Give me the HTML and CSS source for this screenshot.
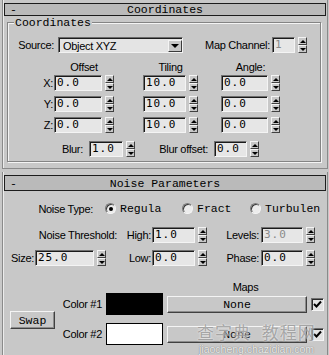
FILE: index.html
```html
<!DOCTYPE html>
<html lang="en">
<head>
<meta charset="UTF-8">
<meta name="viewport" content="width=device-width, initial-scale=1.0">
<title>Noise Map Parameters</title>
<link rel="stylesheet" href="styles.css">
</head>
<body>
<div class="rollout r1">
  <div class="head"><span class="minus">-</span><span class="title">Coordinates</span></div>
  <fieldset class="group">
    <legend>Coordinates</legend>
    <div class="row src-row">
      <span class="lbl w46">Source:</span>
      <div class="combo"><span class="combo-text">Object XYZ</span><span class="combo-btn"></span></div>
      <span class="lbl w86">Map Channel:</span>
      <div class="spin ml2"><span class="field f23 dim">1</span><span class="arrows"><i class="up"></i><i class="dn"></i></span></div>
    </div>
    <div class="row cap-row">
      <span class="w46"></span>
      <span class="cap c-off">Offset</span>
      <span class="cap c-til">Tiling</span>
      <span class="cap c-ang">Angle:</span>
    </div>
    <div class="row xyz x-row">
      <span class="lbl w46 pr1">X:</span>
      <div class="spin"><span class="field f48">0.0</span><span class="arrows"><i class="up"></i><i class="dn"></i></span></div>
      <div class="spin c-til"><span class="field f43">10.0</span><span class="arrows"><i class="up"></i><i class="dn"></i></span></div>
      <div class="spin c-ang"><span class="field f47">0.0</span><span class="arrows"><i class="up"></i><i class="dn"></i></span></div>
    </div>
    <div class="row xyz">
      <span class="lbl w46 pr1">Y:</span>
      <div class="spin"><span class="field f48">0.0</span><span class="arrows"><i class="up"></i><i class="dn"></i></span></div>
      <div class="spin c-til"><span class="field f43">10.0</span><span class="arrows"><i class="up"></i><i class="dn"></i></span></div>
      <div class="spin c-ang"><span class="field f47">0.0</span><span class="arrows"><i class="up"></i><i class="dn"></i></span></div>
    </div>
    <div class="row xyz">
      <span class="lbl w46 pr1">Z:</span>
      <div class="spin"><span class="field f48">0.0</span><span class="arrows"><i class="up"></i><i class="dn"></i></span></div>
      <div class="spin c-til"><span class="field f43">10.0</span><span class="arrows"><i class="up"></i><i class="dn"></i></span></div>
      <div class="spin c-ang"><span class="field f47">0.0</span><span class="arrows"><i class="up"></i><i class="dn"></i></span></div>
    </div>
    <div class="row blur-row">
      <span class="lbl w75">Blur:</span>
      <div class="spin ml6"><span class="field f34">1.0</span><span class="arrows"><i class="up"></i><i class="dn"></i></span></div>
      <span class="lbl w73">Blur offset:</span>
      <div class="spin ml6"><span class="field f33">0.0</span><span class="arrows"><i class="up"></i><i class="dn"></i></span></div>
    </div>
  </fieldset>
</div>

<div class="rollout r2">
  <div class="head"><span class="minus">-</span><span class="title">Noise Parameters</span></div>

  <div class="row type-row">
    <span class="lbl w89">Noise Type:</span>
    <label class="opt o1"><span class="radio on"></span><span class="opt-text">Regula</span></label>
    <label class="opt o2"><span class="radio"></span><span class="opt-text">Fract</span></label>
    <label class="opt o3"><span class="radio"></span><span class="opt-text">Turbulen</span></label>
  </div>

  <div class="row par-row thr-row">
    <span class="lbl w113">Noise Threshold:</span>
    <span class="lbl w34">High:</span>
    <div class="spin ml1"><span class="field f43">1.0</span><span class="arrows"><i class="up"></i><i class="dn"></i></span></div>
    <span class="lbl w52">Levels:</span>
    <div class="spin ml2"><span class="field f42 dim">3.0</span><span class="arrows"><i class="up"></i><i class="dn"></i></span></div>
  </div>

  <div class="row par-row size-row">
    <span class="lbl w30">Size:</span>
    <div class="spin ml1"><span class="field f59">25.0</span><span class="arrows"><i class="up"></i><i class="dn"></i></span></div>
    <span class="lbl w45">Low:</span>
    <div class="spin ml1"><span class="field f43">0.0</span><span class="arrows"><i class="up"></i><i class="dn"></i></span></div>
    <span class="lbl w52">Phase:</span>
    <div class="spin ml2"><span class="field f42">0.0</span><span class="arrows"><i class="up"></i><i class="dn"></i></span></div>
  </div>

  <div class="colors">
    <span class="maps">Maps</span>
    <button class="btn swap">Swap</button>
    <span class="clabel l1">Color #1</span>
    <span class="swatch s1 black"></span>
    <button class="btn none b1">None</button>
    <span class="check c1"><svg width="11" height="11" viewBox="0 0 11 11"><path d="M2 5 L4.5 7.5 L9 2.5" fill="none" stroke="#000" stroke-width="2"/></svg></span>
    <span class="clabel l2">Color #2</span>
    <span class="swatch s2 white"></span>
    <button class="btn none b2">None</button>
    <span class="check c2"><svg width="11" height="11" viewBox="0 0 11 11"><path d="M2 5 L4.5 7.5 L9 2.5" fill="none" stroke="#000" stroke-width="2"/></svg></span>
  </div>
</div>

<div class="mark">
  <div class="mark-cn">查字典 教程网</div>
  <div class="mark-url">jiaocheng.chazidian.com</div>
</div>
</body>
</html>
```

FILE: styles.css
```css
body {
  margin: 0;
  width: 329px;
  height: 355px;
  overflow: hidden;
  position: relative;
  background-color: #c8c8c8;
  font-family: "Liberation Sans", Arial, sans-serif;
  font-size: 11px;
  letter-spacing: -0.3px;
  color: #000;
}

/* rollouts */
.rollout {
  width: 323px;
  margin-left: 2px;
  padding-left: 1px;
  border-left: 1px solid #8a8a8a;
  border-right: 1px solid #8a8a8a;
  box-shadow: inset 1px 0 0 #ececec;
}
.r1 {
  padding-top: 3px;
  border-bottom: 1px solid #8a8a8a;
}
.r2 {
  margin-top: 3px;
  padding-top: 3px;
  padding-bottom: 10px;
}
.head {
  box-sizing: border-box;
  height: 13px;
  margin-right: 1px;
  border: 1px solid #1c1c1c;
  background-color: #bababa;
  display: grid;
  grid-template-columns: 1fr auto 1fr;
  align-items: center;
  font-family: "Liberation Mono", "Courier New", monospace;
  font-size: 11.5px;
  line-height: 11px;
  letter-spacing: 0;
}
.r2 .head {
  height: 16px;
}
.minus {
  padding-left: 5px;
}

/* group box */
.group {
  width: 312px;
  min-width: 0;
  margin: 0 0 6px 3px;
  padding: 0 0 4px 0;
  border: 1px solid #848484;
  box-shadow: inset 1px 1px 0 #f4f4f4, 1px 1px 0 #f4f4f4;
}
.group legend {
  margin-left: 6px;
  padding: 0 1px;
  background-color: #c8c8c8;
  font-family: "Liberation Mono", "Courier New", monospace;
  font-size: 11.5px;
  line-height: 13px;
  letter-spacing: 0;
}

/* rows */
.row {
  display: flex;
  align-items: center;
  height: 16px;
  white-space: nowrap;
}
.src-row { margin-top: 8px; }
.cap-row { margin-top: 8px; height: 13px; line-height: 13px; }
.x-row { margin-top: 1px; }
.xyz + .xyz { margin-top: 5px; }
.blur-row { margin-top: 8px; }

.lbl {
  flex: none;
  text-align: right;
}
.pr1 { box-sizing: border-box; padding-right: 1px; }
.w30 { width: 30px; }
.w34 { width: 34px; }
.w45 { width: 45px; }
.w46 { width: 46px; flex: none; }
.w52 { width: 52px; }
.w73 { width: 73px; }
.w75 { width: 75px; }
.w86 { width: 86px; }
.w89 { width: 89px; }
.w113 { width: 113px; }
.ml1 { margin-left: 1px; }
.ml2 { margin-left: 2px; }
.ml6 { margin-left: 6px; }

.cap {
  text-align: center;
  flex: none;
}
.c-off { width: 60px; }
.c-til { margin-left: 29px; }
.cap.c-til { width: 55px; }
.c-ang { margin-left: 23px; }
.cap.c-ang { width: 59px; }

/* combo box */
.combo {
  box-sizing: border-box;
  flex: none;
  width: 125px;
  height: 16px;
  margin-left: 4px;
  margin-right: 1px;
  display: flex;
  align-items: center;
  justify-content: space-between;
  background-color: #e4e4e4;
  border: 1px solid;
  border-color: #6a6a6a #f2f2f2 #f2f2f2 #6a6a6a;
  box-shadow: inset 1px 1px 0 #1c1c1c;
}
.combo-text {
  padding-left: 4px;
  padding-top: 1px;
}
.combo-btn {
  box-sizing: border-box;
  width: 14px;
  height: 12px;
  margin-top: 1px;
  display: flex;
  align-items: center;
  justify-content: center;
  background-color: #c8c8c8;
  border: 1px solid;
  border-color: #f4f4f4 #3a3a3a #3a3a3a #f4f4f4;
}
.combo-btn::after {
  content: "";
  border-left: 4px solid transparent;
  border-right: 4px solid transparent;
  border-top: 4px solid #000;
}

/* spinners */
.spin {
  flex: none;
  display: flex;
  align-items: center;
  gap: 3px;
}
.field {
  box-sizing: border-box;
  height: 16px;
  padding-left: 2px;
  background-color: #e6e6e6;
  border: 1px solid;
  border-color: #707070 #f4f4f4 #f4f4f4 #707070;
  box-shadow: inset 1px 1px 0 #1a1a1a;
  font-family: "DejaVu Sans Mono", monospace;
  font-size: 11px;
  line-height: 14px;
  letter-spacing: 1px;
  overflow: hidden;
}
.f23 { width: 23px; }
.f33 { width: 33px; }
.f34 { width: 34px; }
.f42 { width: 42px; }
.f43 { width: 43px; }
.f47 { width: 47px; }
.f48 { width: 48px; }
.f59 { width: 59px; }
.dim { color: #8a8a8a; }

.arrows {
  width: 9px;
  height: 16px;
  display: flex;
  flex-direction: column;
}
.arrows i {
  box-sizing: border-box;
  flex: 1;
  display: flex;
  align-items: center;
  justify-content: center;
  background-color: #c8c8c8;
  border: 1px solid;
  border-color: #f4f4f4 #404040 #404040 #f4f4f4;
}
.arrows .up::after {
  content: "";
  border-left: 3px solid transparent;
  border-right: 3px solid transparent;
  border-bottom: 3px solid #000;
}
.arrows .dn::after {
  content: "";
  border-left: 3px solid transparent;
  border-right: 3px solid transparent;
  border-top: 3px solid #000;
}

/* noise type */
.type-row {
  margin-top: 10px;
  height: 15px;
}
.opt {
  flex: none;
  display: flex;
  align-items: center;
  font-family: "Liberation Mono", "Courier New", monospace;
  font-size: 11.5px;
  letter-spacing: 0;
}
.o1 { width: 77px; margin-left: 12px; }
.o2 { width: 68px; }
.radio {
  box-sizing: border-box;
  width: 11px;
  height: 11px;
  margin-right: 4px;
  border-radius: 50%;
  border: 1px solid;
  border-color: #7a7a7a #f4f4f4 #f4f4f4 #7a7a7a;
  box-shadow: inset 1px 1px 0 #3a3a3a;
  background-color: #ececec;
  display: flex;
  align-items: center;
  justify-content: center;
}
.radio.on::after {
  content: "";
  width: 4px;
  height: 4px;
  border-radius: 50%;
  background-color: #000;
}

.thr-row { margin-top: 11px; }
.size-row { margin-top: 7px; }

/* colors and maps */
.colors {
  margin-top: 15px;
  display: grid;
  grid-template-columns: 52px 42px 57px 140px 13px;
  grid-template-rows: 12px 22px 8px 22px;
  column-gap: 4px;
  align-items: center;
}
.maps {
  grid-column: 4 / 6;
  grid-row: 1;
  text-align: center;
  line-height: 12px;
}
.btn {
  box-sizing: border-box;
  padding: 0;
  background-color: #c8c8c8;
  border: 1px solid;
  border-color: #f4f4f4 #404040 #404040 #f4f4f4;
  box-shadow: inset -1px -1px 0 #8c8c8c;
  font-family: "Liberation Mono", "Courier New", monospace;
  font-size: 11.5px;
  letter-spacing: 0;
  color: #000;
}
.swap {
  grid-column: 1;
  grid-row: 2 / 5;
  width: 45px;
  height: 18px;
  margin: 2px 0 0 6px;
}
.clabel {
  text-align: right;
}
.l1 { grid-column: 2; grid-row: 2; }
.l2 { grid-column: 2; grid-row: 4; }
.swatch {
  box-sizing: border-box;
  height: 22px;
  align-self: stretch;
}
.s1 { grid-column: 3; grid-row: 2; }
.s2 { grid-column: 3; grid-row: 4; }
.black { background-color: #000; }
.white {
  background-color: #fff;
  border: 1px solid #000;
}
.none {
  height: 17px;
}
.b1 { grid-column: 4; grid-row: 2; }
.b2 { grid-column: 4; grid-row: 4; }
.check {
  box-sizing: border-box;
  width: 13px;
  height: 13px;
  display: flex;
  align-items: center;
  justify-content: center;
  background-color: #e4e4e4;
  border: 1px solid;
  border-color: #707070 #f4f4f4 #f4f4f4 #707070;
  box-shadow: inset 1px 1px 0 #2a2a2a;
}
.c1 { grid-column: 5; grid-row: 2; }
.c2 { grid-column: 5; grid-row: 4; }

/* watermark */
.mark {
  position: absolute;
  left: 197px;
  top: 321px;
  letter-spacing: 0;
  pointer-events: none;
}
.mark-cn {
  font-family: "Noto Sans CJK SC", sans-serif;
  font-size: 17px;
  line-height: 22px;
  letter-spacing: 1px;
  word-spacing: 6px;
  color: rgba(135, 135, 135, 0.7);
  text-shadow: 0 0 2px rgba(255, 255, 255, 0.95);
}
.mark-url {
  margin-top: 1px;
  padding-left: 2px;
  font-family: "Liberation Sans", Arial, sans-serif;
  font-size: 10.5px;
  line-height: 11px;
  color: rgba(250, 250, 250, 0.9);
  text-shadow: 0 0 1px rgba(60, 60, 60, 0.8);
}
```
